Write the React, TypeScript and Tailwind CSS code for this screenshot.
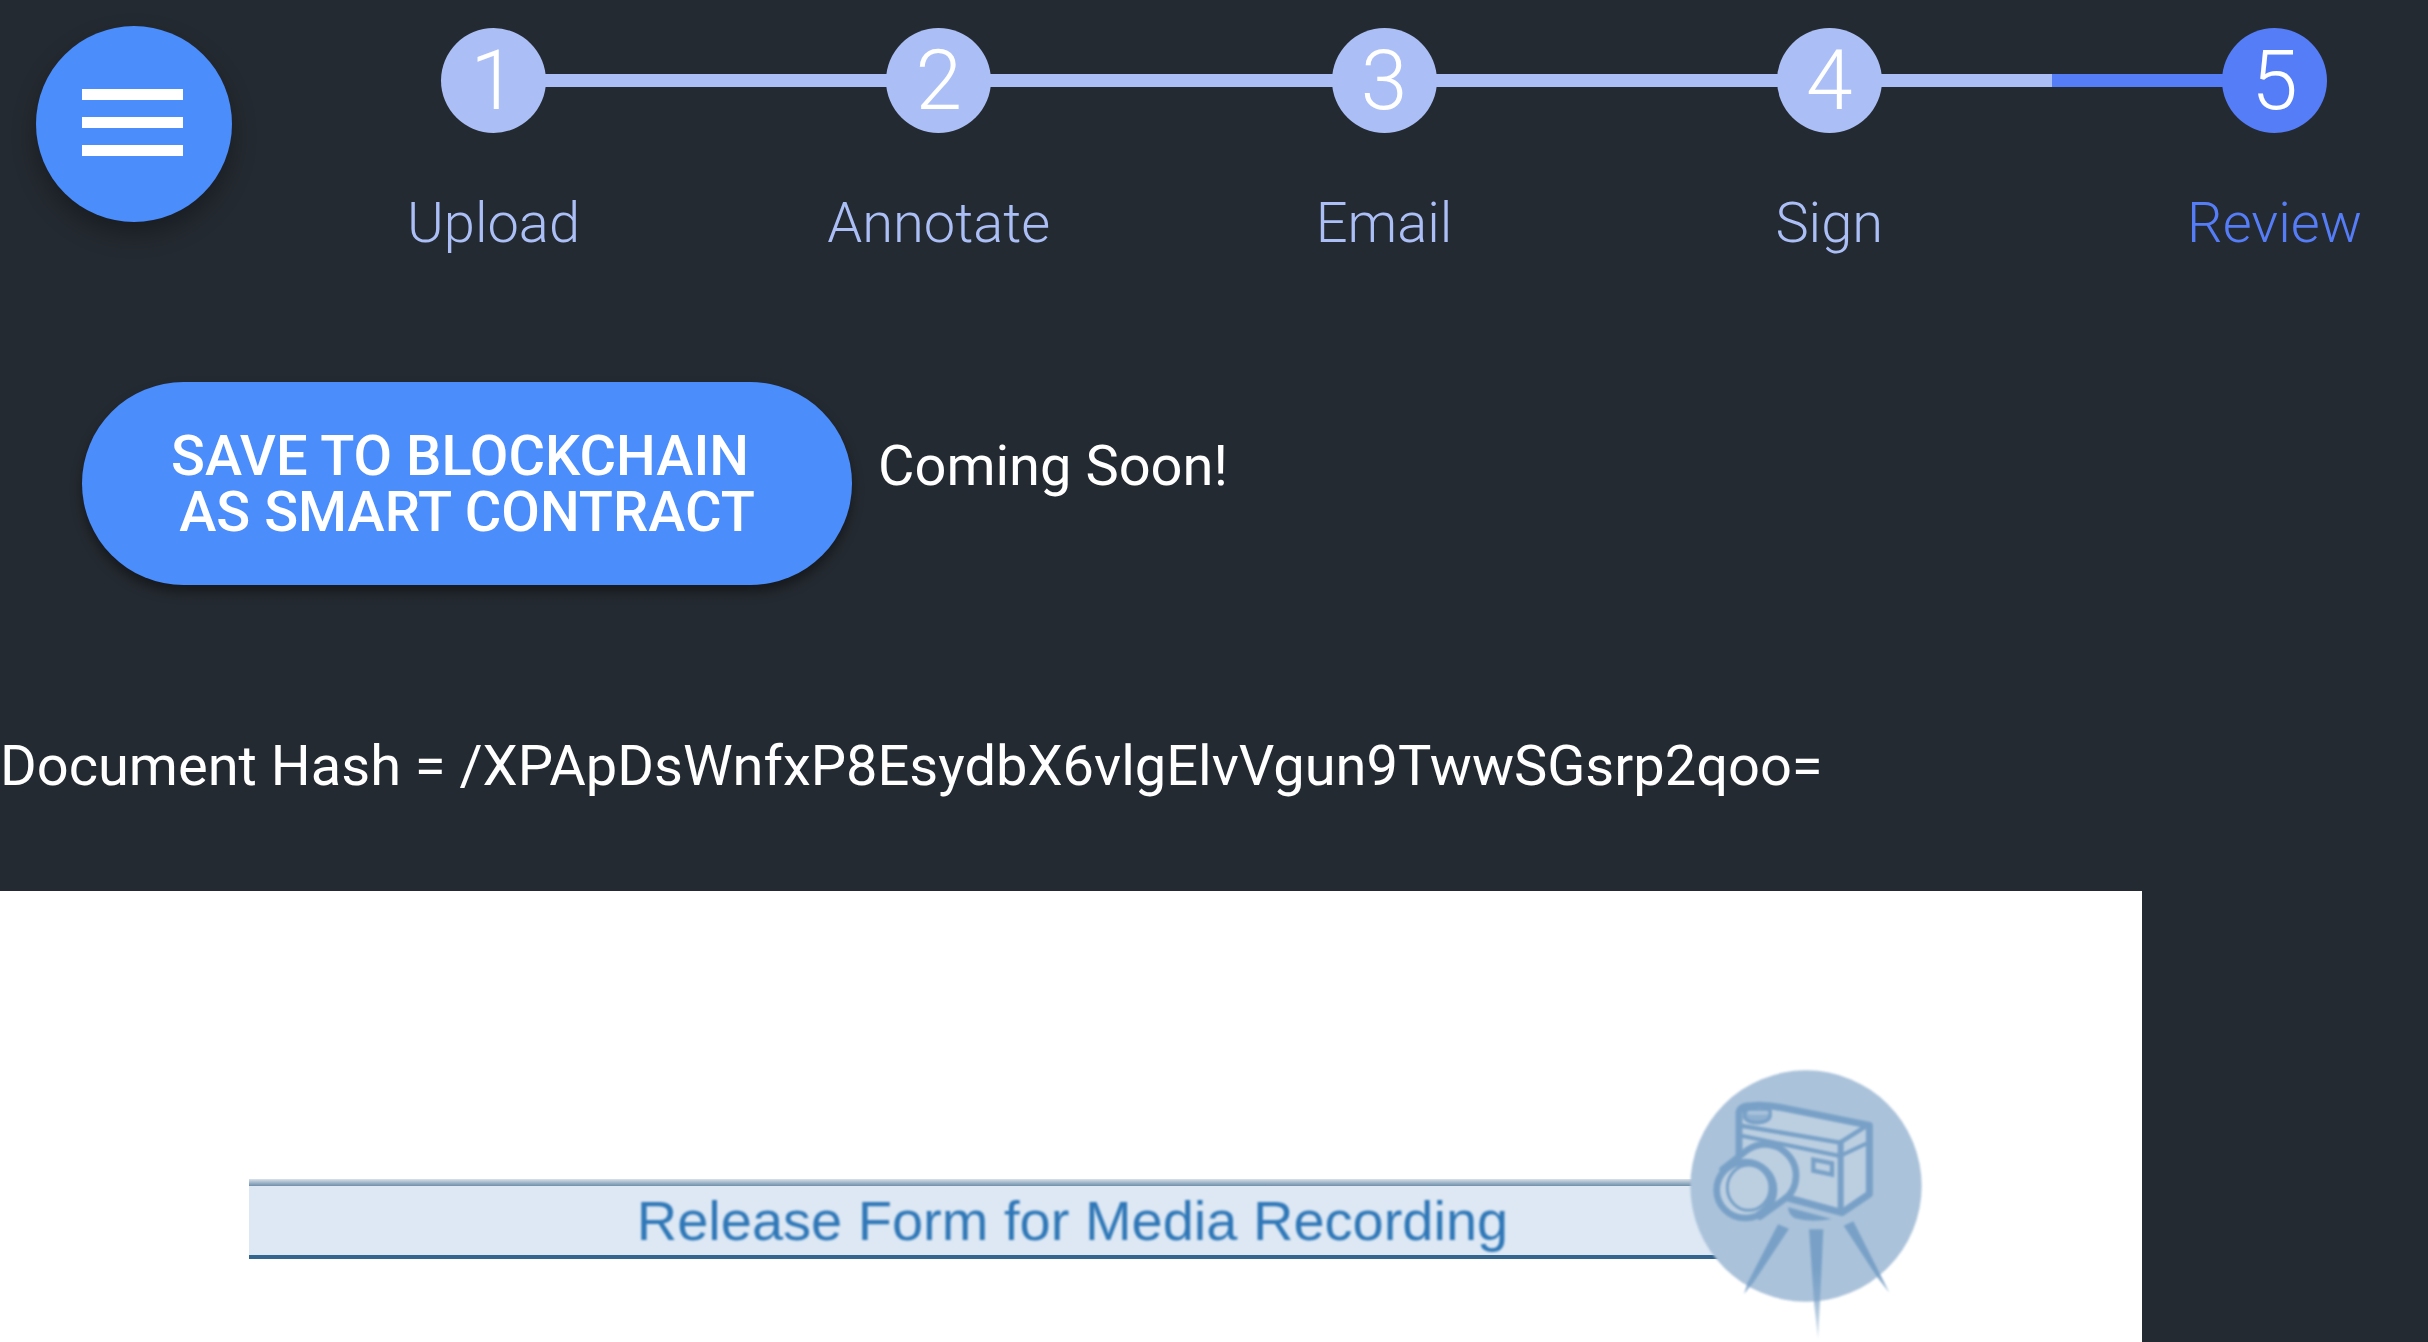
const steps = ["Upload", "Annotate", "Email", "Sign", "Review"];
const current = steps.length - 1;

function Stepper() {
  return (
    <ol className="flex min-w-0 flex-1 pt-[28px] pr-[101px] font-light">
      {steps.map((label, i) => {
        const active = i === current;
        return (
          <li key={label} className={i < current ? "flex min-w-0 flex-1" : "flex flex-none"}>
            <div
              className={
                "flex w-[105px] flex-none flex-col items-center gap-[57px] " +
                (active ? "text-[#567df8]" : "text-[#abbff6]")
              }
            >
              <span
                className={
                  "flex size-[105px] items-center justify-center rounded-full text-[84px] leading-[106px] text-white " +
                  (active ? "bg-[#567df8]" : "bg-[#abbff6]")
                }
              >
                {i + 1}
              </span>
              <span className="text-[56px] leading-[66px] whitespace-nowrap">{label}</span>
            </div>
            {i < current && (
              <span className="-mx-px mt-[46px] flex h-[13px] flex-1">
                <span className="flex-1 bg-[#abbff6]" />
                <span className={i + 1 === current ? "flex-1 bg-[#567df8]" : "flex-1 bg-[#abbff6]"} />
              </span>
            )}
          </li>
        );
      })}
    </ol>
  );
}

function CameraLogo() {
  return (
    <svg viewBox="90 84 702 816" className="h-[272px] w-[234px]" aria-hidden="true">
      <defs>
        <linearGradient id="leg" x1="0" y1="540" x2="0" y2="890" gradientUnits="userSpaceOnUse">
          <stop offset="0.4" stopColor="#79a1c7" />
          <stop offset="1" stopColor="#79a1c7" stopOpacity="0.3" />
        </linearGradient>
      </defs>
      <circle cx="438" cy="432" r="347" fill="#aac2da" />
      <g stroke="#79a1c7" strokeLinejoin="round" strokeLinecap="round" fill="#bccfe1">
        <path d="M237 350 V212 Q240 192 272 191 Q320 186 380 200 L628 250 V456 L546 512 L385 468 Z" strokeWidth="21" />
        <path d="M248 252 L540 302 L622 250" fill="none" strokeWidth="13" />
        <path d="M248 282 L540 342 L616 306" fill="none" strokeWidth="12" />
        <path d="M542 302 V508" fill="none" strokeWidth="18" />
        <path d="M254 206 V226 Q262 242 294 242 Q326 240 330 224 V206 Z" fill="#8fb0d0" strokeWidth="11" />
        <path d="M268 212 H320" fill="none" stroke="#a9c2db" strokeWidth="12" />
        <path d="M460 353 L516 364 V398 L460 386 Z" strokeWidth="13" strokeLinejoin="miter" />
        <path d="M188 382 L262 324 Q310 293 362 320 Q410 352 408 404 Q406 450 372 472 L300 524 Z" strokeWidth="20" />
        <ellipse cx="256" cy="444" rx="86" ry="84" strokeWidth="20" />
        <ellipse cx="266" cy="437" rx="64" ry="68" strokeWidth="9" />
        <path d="M262 361 Q330 370 338 440 Q338 490 296 516" fill="none" strokeWidth="18" />
      </g>
      <path d="M384 496 L515 531 Q450 542 405 529 Q386 520 384 496 Z" fill="#79a1c7" />
      <path d="M354 547 L387 560 L280 722 L252 756 L262 724 Z" fill="url(#leg)" />
      <path d="M447 562 H490 L480 780 L474 890 L462 780 Z" fill="url(#leg)" />
      <path d="M551 551 L580 538 L660 696 L688 752 L652 706 Z" fill="url(#leg)" />
    </svg>
  );
}

export default function App() {
  return (
    <div className="flex min-h-screen flex-col overflow-x-hidden bg-[#242a31] font-[Roboto,sans-serif] text-[56px] leading-[66px] text-white">
      <header className="flex items-start pl-[36px]">
        <button
          type="button"
          aria-label="Open menu"
          className="mt-[26px] mr-[209px] flex size-[196px] flex-none flex-col items-center justify-center gap-[17px] rounded-full bg-[#4b8dfb] pr-[3px] pb-[4px] shadow-[0_12px_24px_rgba(0,0,0,0.3)]"
        >
          <span className="h-[11px] w-[101px] bg-white" />
          <span className="h-[11px] w-[101px] bg-white" />
          <span className="h-[11px] w-[101px] bg-white" />
        </button>
        <Stepper />
      </header>

      <main className="flex flex-1 flex-col">
        <section className="mt-[126px] flex items-start pl-[82px]">
          <button
            type="button"
            className="flex h-[203px] w-[770px] flex-col items-center justify-center rounded-full bg-[#4b8dfb] text-[56px] leading-[56px] font-medium shadow-[0_7px_12px_rgba(0,0,0,0.4)]"
          >
            <span>SAVE TO BLOCKCHAIN{"\u00a0"}</span>
            <span>AS SMART CONTRACT</span>
          </button>
          <p className="mt-[51px] ml-[26px]">Coming Soon!</p>
        </section>

        <p className="mt-[148px] break-all">Document Hash = /XPApDsWnfxP8EsydbX6vlgElvVgun9TwwSGsrp2qoo=</p>

        <article className="mt-[92px] w-full max-w-[2142px] flex-1 bg-white px-[249px] pt-[288px] font-['Liberation_Sans',sans-serif]">
          <div className="relative">
            <div className="h-[7px] bg-linear-to-b from-[#d9e2ea] to-[#6f8faa]" />
            <div className="bg-[#dde8f4]">
              <h1 className="pl-[3px] text-center text-[56px] leading-[69px] text-[#2f77b7] blur-[1px]">
                Release Form for Media Recording
              </h1>
            </div>
            <div className="h-[4px] bg-[#34658f]" />
            <div className="absolute top-[-109px] right-[-31px] blur-[1px]">
              <CameraLogo />
            </div>
          </div>
        </article>
      </main>
    </div>
  );
}
